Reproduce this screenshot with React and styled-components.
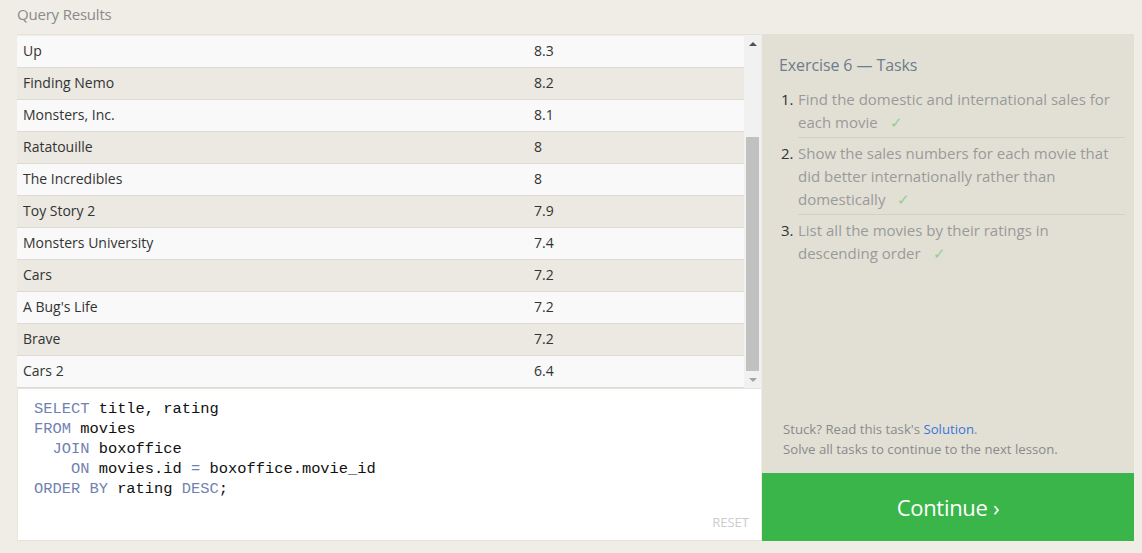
import styled, { createGlobalStyle } from "styled-components";

const GlobalStyle = createGlobalStyle`
html, body {
    margin: 0;
    padding: 0;
    background: #efede6;
    font-family: "Open Sans", "Noto Sans", sans-serif;
}
`;

const rows = [
    ["Up", "8.3"],
    ["Finding Nemo", "8.2"],
    ["Monsters, Inc.", "8.1"],
    ["Ratatouille", "8"],
    ["The Incredibles", "8"],
    ["Toy Story 2", "7.9"],
    ["Monsters University", "7.4"],
    ["Cars", "7.2"],
    ["A Bug's Life", "7.2"],
    ["Brave", "7.2"],
    ["Cars 2", "6.4"],
];

const tasks = [
    "Find the domestic and international sales for each movie",
    "Show the sales numbers for each movie that did better internationally rather than domestically",
    "List all the movies by their ratings in descending order",
];

const App = () => {
    return (
        <>
            <GlobalStyle />
            <Page>
                <Heading>Query Results</Heading>
                <Main>
                    <LeftCol>
                        <Results>
                            <Table>
                                {rows.map(([title, rating], i) => (
                                    <Row key={i} $odd={i % 2 === 1}>
                                        <Cell>{title}</Cell>
                                        <Cell>{rating}</Cell>
                                    </Row>
                                ))}
                            </Table>
                            <Scrollbar>
                                <Arrow><ArrowUp /></Arrow>
                                <Track>
                                    <Thumb />
                                </Track>
                                <Arrow><ArrowDown /></Arrow>
                            </Scrollbar>
                        </Results>
                        <Editor>
                            <Code>
                                <Kw>SELECT</Kw> title, rating{"\n"}
                                <Kw>FROM</Kw> movies{"\n"}
                                {"  "}<Kw>JOIN</Kw> boxoffice{"\n"}
                                {"    "}<Kw>ON</Kw> movies.id <Kw>=</Kw> boxoffice.movie_id{"\n"}
                                <Kw>ORDER BY</Kw> rating <Kw>DESC</Kw>;
                            </Code>
                            <Reset>RESET</Reset>
                        </Editor>
                    </LeftCol>
                    <RightCol>
                        <TaskBox>
                            <TaskTitle>Exercise 6 — Tasks</TaskTitle>
                            <TaskList>
                                {tasks.map((t, i) => (
                                    <Task key={i}>
                                        <Num>{i + 1}.</Num>
                                        <TaskText $last={i === tasks.length - 1}>
                                            {t}{" "}<Check>✓</Check>
                                        </TaskText>
                                    </Task>
                                ))}
                            </TaskList>
                        </TaskBox>
                        <Hint>
                            Stuck? Read this task's <a href="#">Solution</a>.<br />
                            Solve all tasks to continue to the next lesson.
                        </Hint>
                        <Continue>Continue ›</Continue>
                    </RightCol>
                </Main>
            </Page>
        </>
    );
}

const Page = styled.div`
padding: 0 8px 12px 17px;
height: 553px;
box-sizing: border-box;
display: flex;
flex-direction: column;
`

const Heading = styled.div`
height: 34px;
line-height: 28px;
font-size: 15px;
color: #8a8a8a;
letter-spacing: -0.2px;
`

const Main = styled.div`
display: flex;
gap: 1px;
height: 507px;
`

const LeftCol = styled.div`
width: 744px;
display: flex;
flex-direction: column;
`

const Results = styled.div`
display: flex;
height: 354px;
border-top: 1px solid #e4e2db;
box-sizing: border-box;
`

const Table = styled.div`
flex: 1;
display: flex;
flex-direction: column;
padding-top: 1px;
`

const Row = styled.div`
display: grid;
grid-template-columns: 511px 1fr;
height: 32px;
box-sizing: border-box;
border-bottom: 1px solid #dddbd4;
background: ${p => p.$odd ? "#ebe9e2" : "#f9f9f9"};
`

const Cell = styled.div`
padding: 0 6px;
line-height: 30px;
font-size: 14px;
color: #333;
`

const Scrollbar = styled.div`
width: 17px;
background: #f1f1f1;
display: flex;
flex-direction: column;
`

const Arrow = styled.div`
height: 17px;
display: flex;
align-items: center;
justify-content: center;
`

const ArrowUp = styled.div`
width: 0;
height: 0;
border-left: 4px solid transparent;
border-right: 4px solid transparent;
border-bottom: 4px solid #505050;
`

const ArrowDown = styled.div`
width: 0;
height: 0;
border-left: 4px solid transparent;
border-right: 4px solid transparent;
border-top: 4px solid #a3a3a3;
`

const Track = styled.div`
flex: 1;
display: flex;
flex-direction: column;
justify-content: flex-end;
padding: 0 2px;
`

const Thumb = styled.div`
height: 234px;
background: #c1c1c1;
`

const Editor = styled.div`
flex: 1;
background: #fff;
border-top: 1px solid #e4e2db;
border-left: 1px solid #e8e6df;
border-bottom: 1px solid #e4e2db;
display: flex;
flex-direction: column;
padding: 10px 12px 9px 16px;
`

const Code = styled.pre`
margin: 0;
flex: 1;
font-family: "Liberation Mono", "DejaVu Sans Mono", monospace;
font-size: 15.4px;
line-height: 20px;
color: #111;
`

const Kw = styled.span`
color: #7182b2;
`

const Reset = styled.div`
align-self: flex-end;
font-size: 13px;
color: #cccccc;
margin-right: 0;
`

const RightCol = styled.div`
width: 372px;
background: #e2e0d5;
display: flex;
flex-direction: column;
`

const TaskBox = styled.div`
flex: 1;
padding: 20px 9px 0 17px;
`

const TaskTitle = styled.div`
font-size: 16px;
color: #6e7c8c;
letter-spacing: -0.1px;
margin-bottom: 8px;
`

const TaskList = styled.ol`
list-style: none;
margin: 0;
padding: 0;
`

const Task = styled.li`
display: grid;
grid-template-columns: 19px 1fr;
font-size: 15px;
line-height: 23px;
`

const Num = styled.span`
color: #333;
padding-top: 4px;
text-align: left;
padding-left: 2px;
`

const TaskText = styled.div`
color: #9a9a9a;
padding: 4px 0 3px 0;
border-bottom: ${p => p.$last ? "none" : "1px solid #d3d1c6"};
`

const Check = styled.span`
color: #8fd08f;
padding-left: 8px;
`

const Hint = styled.div`
padding: 0 16px 14px 21px;
font-size: 13.2px;
line-height: 20px;
color: #8a8a8a;
a {
    color: #3b74d9;
    text-decoration: none;
}
`

const Continue = styled.div`
height: 68px;
background: #3ab54a;
color: #fff;
font-size: 22px;
display: flex;
align-items: center;
justify-content: center;
letter-spacing: -0.3px;
`

export default App;
